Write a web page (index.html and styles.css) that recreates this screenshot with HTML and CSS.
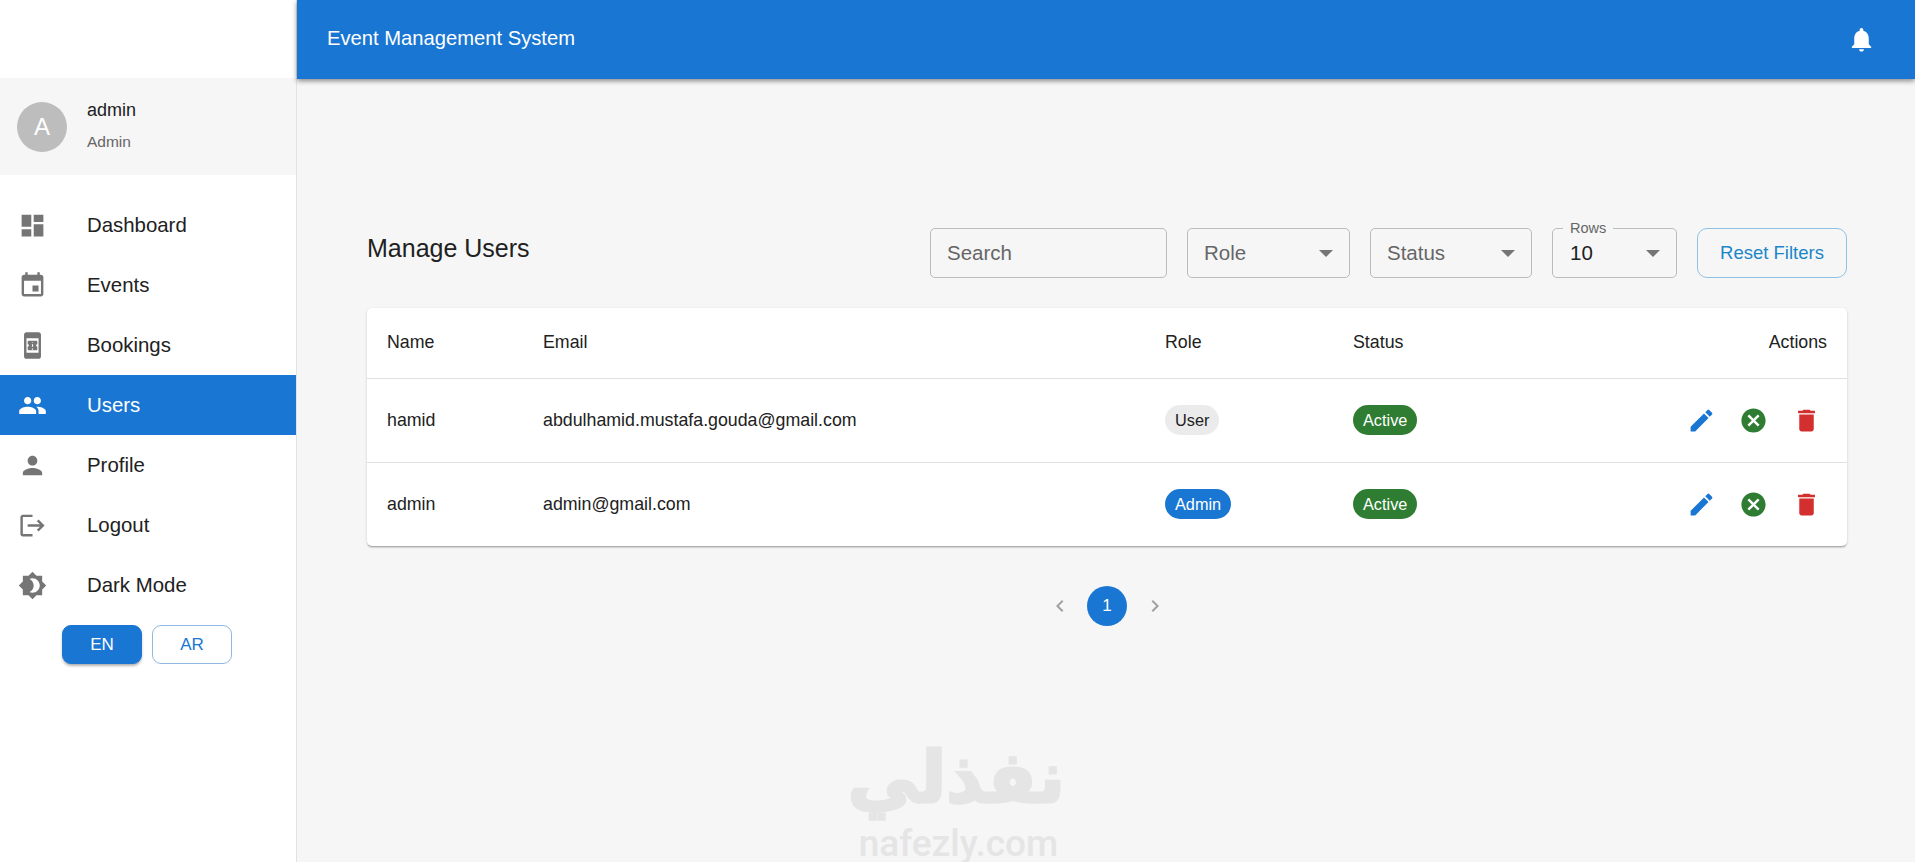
FILE: index.html
```html
<!DOCTYPE html>
<html lang="en">
<head>
  <meta charset="UTF-8" />
  <title>Event Management System</title>
  <link rel="stylesheet" href="styles.css">
</head>
<body>
  <aside class="sidebar">
    <div class="profile">
      <div class="avatar">A</div>
      <div class="profile-text">
        <div class="profile-name">admin</div>
        <div class="profile-role">Admin</div>
      </div>
    </div>

    <nav class="nav">
      <a class="nav-item">
        <svg class="nav-icon" viewBox="0 0 24 24"><path d="M3 13h8V3H3v10zm0 8h8v-6H3v6zm10 0h8V11h-8v10zm0-18v6h8V3h-8z"/></svg>
        <span>Dashboard</span>
      </a>
      <a class="nav-item">
        <svg class="nav-icon" viewBox="0 0 24 24"><path d="M17 12h-5v5h5v-5zM16 1v2H8V1H6v2H5c-1.11 0-1.99.9-1.99 2L3 19c0 1.1.89 2 2 2h14c1.1 0 2-.9 2-2V5c0-1.1-.9-2-2-2h-1V1h-2zm3 18H5V8h14v11z"/></svg>
        <span>Events</span>
      </a>
      <a class="nav-item">
        <svg class="nav-icon" viewBox="0 0 24 24"><path d="M17 1H7c-1.1 0-2 .9-2 2v18c0 1.1.9 2 2 2h10c1.1 0 2-.9 2-2V3c0-1.1-.9-2-2-2zM7 18V6h10v12H7zm9-7V9c0-.55-.45-1-1-1H9c-.55 0-.99.45-.99 1v2c.55 0 .99.45.99 1s-.44 1-1 1v2c0 .55.45 1 1 1h6c.55 0 1-.45 1-1v-2c-.55 0-1-.45-1-1s.45-1 1-1zm-3.500 4.500h-1v-1h1v1zm0-2.500h-1v-2h1v2zm0-3h-1V9.500h1V10z"/></svg>
        <span>Bookings</span>
      </a>
      <a class="nav-item active">
        <svg class="nav-icon" viewBox="0 0 24 24"><path d="M16 11c1.660 0 2.990-1.340 2.990-3S17.660 5 16 5c-1.660 0-3 1.340-3 3s1.340 3 3 3zm-8 0c1.660 0 2.990-1.340 2.990-3S9.660 5 8 5C6.340 5 5 6.340 5 8s1.340 3 3 3zm0 2c-2.330 0-7 1.170-7 3.500V19h14v-2.500c0-2.330-4.670-3.500-7-3.500zm8 0c-.29 0-.62.02-.97.05 1.160.84 1.970 1.970 1.970 3.450V19h6v-2.500c0-2.330-4.670-3.500-7-3.500z"/></svg>
        <span>Users</span>
      </a>
      <a class="nav-item">
        <svg class="nav-icon" viewBox="0 0 24 24"><path d="M12 12c2.210 0 4-1.790 4-4s-1.790-4-4-4-4 1.790-4 4 1.790 4 4 4zm0 2c-2.670 0-8 1.340-8 4v2h16v-2c0-2.660-5.330-4-8-4z"/></svg>
        <span>Profile</span>
      </a>
      <a class="nav-item">
        <svg class="nav-icon" viewBox="0 0 24 24"><path d="M17 7l-1.410 1.410L18.170 11H8v2h10.170l-2.580 2.580L17 17l5-5zM4 5h8V3H4c-1.100 0-2 .9-2 2v14c0 1.100.9 2 2 2h8v-2H4V5z"/></svg>
        <span>Logout</span>
      </a>
      <a class="nav-item">
        <svg class="nav-icon" viewBox="0 0 24 24"><path d="M20 8.690V4h-4.690L12 .69 8.690 4H4v4.690L.69 12 4 15.310V20h4.690L12 23.310 15.310 20H20v-4.690L23.310 12 20 8.690zM12 18c-.89 0-1.740-.2-2.500-.55C11.560 16.500 13 14.420 13 12s-1.440-4.500-3.500-5.450C10.260 6.200 11.110 6 12 6c3.310 0 6 2.690 6 6s-2.690 6-6 6z"/></svg>
        <span>Dark Mode</span>
      </a>
    </nav>

    <div class="lang">
      <button class="lang-btn lang-on">EN</button>
      <button class="lang-btn">AR</button>
    </div>
  </aside>

  <div class="main">
    <header class="appbar">
      <div class="appbar-title">Event Management System</div>
      <svg class="bell" viewBox="0 0 24 24"><path d="M12 22c1.100 0 2-.9 2-2h-4c0 1.100.89 2 2 2zm6-6v-5c0-3.070-1.640-5.640-4.500-6.320V4c0-.83-.67-1.500-1.500-1.500s-1.500.67-1.500 1.500v.68C7.630 5.360 6 7.920 6 11v5l-2 2v1h16v-1l-2-2z"/></svg>
    </header>

    <main class="content">
      <div class="toolbar">
        <h1 class="page-title">Manage Users</h1>
        <div class="filters">
          <div class="field field-search"><span class="placeholder">Search</span></div>
          <div class="field field-role"><span class="placeholder">Role</span><i class="caret"></i></div>
          <div class="field field-status"><span class="placeholder">Status</span><i class="caret"></i></div>
          <div class="field field-rows"><span class="field-label">Rows</span><span>10</span><i class="caret"></i></div>
          <button class="reset-btn">Reset Filters</button>
        </div>
      </div>

      <div class="card">
        <table class="users">
          <colgroup>
            <col class="col-name"><col class="col-email"><col class="col-role"><col class="col-status"><col>
          </colgroup>
          <thead>
            <tr><th>Name</th><th>Email</th><th>Role</th><th>Status</th><th class="right">Actions</th></tr>
          </thead>
          <tbody>
            <tr>
              <td>hamid</td>
              <td>abdulhamid.mustafa.gouda@gmail.com</td>
              <td><span class="chip chip-grey">User</span></td>
              <td><span class="chip chip-green">Active</span></td>
              <td class="right">
                <div class="actions">
                  <button class="act blue"><svg viewBox="0 0 24 24"><path d="M3 17.250V21h3.750L17.810 9.940l-3.750-3.750L3 17.250zM20.710 7.040c.39-.39.39-1.020 0-1.410l-2.340-2.340a.996.996 0 00-1.410 0l-1.830 1.830 3.750 3.750 1.830-1.830z"/></svg></button>
                  <button class="act green"><svg viewBox="0 0 24 24"><path d="M12 2C6.470 2 2 6.470 2 12s4.470 10 10 10 10-4.470 10-10S17.530 2 12 2zm5 13.590L15.590 17 12 13.410 8.410 17 7 15.590 10.590 12 7 8.410 8.410 7 12 10.590 15.590 7 17 8.410 13.410 12 17 15.590z"/></svg></button>
                  <button class="act red"><svg viewBox="0 0 24 24"><path d="M6 19c0 1.100.9 2 2 2h8c1.100 0 2-.9 2-2V7H6v12zM19 4h-3.500l-1-1h-5l-1 1H5v2h14V4z"/></svg></button>
                </div>
              </td>
            </tr>
            <tr>
              <td>admin</td>
              <td>admin@gmail.com</td>
              <td><span class="chip chip-blue">Admin</span></td>
              <td><span class="chip chip-green">Active</span></td>
              <td class="right">
                <div class="actions">
                  <button class="act blue"><svg viewBox="0 0 24 24"><path d="M3 17.250V21h3.750L17.810 9.940l-3.750-3.750L3 17.250zM20.710 7.040c.39-.39.39-1.020 0-1.410l-2.340-2.340a.996.996 0 00-1.410 0l-1.830 1.830 3.750 3.750 1.830-1.830z"/></svg></button>
                  <button class="act green"><svg viewBox="0 0 24 24"><path d="M12 2C6.470 2 2 6.470 2 12s4.470 10 10 10 10-4.470 10-10S17.530 2 12 2zm5 13.590L15.590 17 12 13.410 8.410 17 7 15.590 10.590 12 7 8.410 8.410 7 12 10.590 15.590 7 17 8.410 13.410 12 17 15.590z"/></svg></button>
                  <button class="act red"><svg viewBox="0 0 24 24"><path d="M6 19c0 1.100.9 2 2 2h8c1.100 0 2-.9 2-2V7H6v12zM19 4h-3.500l-1-1h-5l-1 1H5v2h14V4z"/></svg></button>
                </div>
              </td>
            </tr>
          </tbody>
        </table>
      </div>

      <div class="pager">
        <button class="page-arrow"><svg viewBox="0 0 24 24"><path d="M15.410 7.410L14 6l-6 6 6 6 1.410-1.410L10.830 12z"/></svg></button>
        <button class="page-num">1</button>
        <button class="page-arrow"><svg viewBox="0 0 24 24"><path d="M10 6L8.590 7.410 13.170 12l-4.580 4.590L10 18l6-6z"/></svg></button>
      </div>
    </main>

    <div class="watermark">
      <div class="wm-ar" lang="ar" dir="rtl">نفذلي</div>
      <div class="wm-en">nafezly.com</div>
    </div>
  </div>
</body>
</html>
```

FILE: styles.css
```css
* { box-sizing: border-box; }
html, body { height: 100%; }
body {
  margin: 0;
  display: flex;
  overflow: hidden;
  background: #f6f6f6;
  color: #212121;
  font-family: "Liberation Sans", Arial, sans-serif;
}
button { font-family: inherit; cursor: pointer; }

/* sidebar */
.sidebar {
  width: 297px;
  flex: none;
  padding-top: 78px;
  background: #fff;
  border-right: 1px solid #e3e3e3;
}
.profile {
  height: 97px;
  display: flex;
  align-items: center;
  gap: 20px;
  padding-left: 17px;
  background: #f6f6f6;
}
.avatar {
  width: 50px;
  height: 50px;
  border-radius: 50%;
  background: #bdbdbd;
  color: #fff;
  font-size: 24px;
  display: flex;
  align-items: center;
  justify-content: center;
}
.profile-text { margin-bottom: 3px; }
.profile-name { font-size: 18px; line-height: 24px; }
.profile-role { font-size: 15.500px; line-height: 20px; margin-top: 10px; color: #666; }

.nav { margin-top: 20px; }
.nav-item {
  height: 60px;
  display: flex;
  align-items: center;
  padding-left: 18px;
  font-size: 20.400px;
  color: #212121;
}
.nav-icon { width: 29px; height: 29px; margin-right: 40px; fill: #757575; flex: none; }
.nav-item.active { background: #1976d2; color: #fff; }
.nav-item.active .nav-icon { fill: #fff; }

.lang {
  display: flex;
  gap: 10px;
  margin: 10px 0 0 62px;
}
.lang-btn {
  width: 80px;
  height: 39px;
  border: 1px solid #90b8e0;
  border-radius: 9px;
  background: #fff;
  color: #1976d2;
  font-size: 17px;
}
.lang-on {
  background: #1976d2;
  border-color: #1976d2;
  color: #fff;
  box-shadow: 0 3px 3px -2px rgba(0,0,0,0.2), 0 2px 3px rgba(0,0,0,0.2);
}

/* main area */
.main { flex: 1; position: relative; min-width: 0; }
.appbar {
  height: 79px;
  display: flex;
  align-items: center;
  justify-content: space-between;
  padding: 0 39px 0 30px;
  background: #1976d2;
  color: #fff;
  box-shadow: 0 2px 5px rgba(0,0,0,0.45);
}
.appbar-title { font-size: 20.200px; margin-bottom: 2px; }
.bell { width: 29px; height: 29px; fill: #fff; }

.content { padding: 149px 68px 0 70px; }
.toolbar {
  display: flex;
  justify-content: space-between;
  height: 50px;
  margin-bottom: 30px;
}
.page-title { margin: 5px 0 0; font-size: 25px; line-height: 30px; font-weight: 400; }
.filters { display: flex; gap: 20px; }
.field {
  position: relative;
  height: 50px;
  display: flex;
  align-items: center;
  padding-left: 16px;
  border: 1px solid #bbb;
  border-radius: 5px;
  font-size: 20.500px;
  color: #212121;
}
.field-search { width: 237px; }
.field-role { width: 163px; }
.field-status { width: 162px; }
.field-rows { width: 125px; padding-left: 17px; }
.placeholder { color: #666; }
.field-label {
  position: absolute;
  top: -9px;
  left: 10px;
  padding: 0 7px;
  font-size: 14.500px;
  line-height: 16px;
  color: #666;
  background: #f6f6f6;
}
.caret {
  position: absolute;
  right: 16px;
  top: 21px;
  border-left: 7px solid transparent;
  border-right: 7px solid transparent;
  border-top: 7px solid #757575;
}
.reset-btn {
  width: 150px;
  height: 50px;
  border: 1px solid #8fc2e2;
  border-radius: 10px;
  background: transparent;
  color: #1c86c9;
  font-size: 18.500px;
}

/* table */
.card {
  background: #fff;
  border-radius: 5px;
  overflow: hidden;
  box-shadow: 0 2px 2px -1px rgba(0,0,0,0.3), 0 1px 3px rgba(0,0,0,0.14);
}
.users {
  width: 100%;
  border-collapse: collapse;
  table-layout: fixed;
  font-size: 17.800px;
}
.col-name { width: 156px; }
.col-email { width: 622px; }
.col-role { width: 188px; }
.col-status { width: 200px; }
.users th, .users td {
  padding: 0 20px;
  text-align: left;
  font-weight: 400;
  border-bottom: 1px solid #e0e0e0;
}
.users tr:last-child td { border-bottom: 0; }
.users th { height: 70px; }
.users td { height: 84px; }
.users .right { text-align: right; }

.chip {
  display: inline-block;
  height: 30px;
  line-height: 30px;
  padding: 0 10px;
  border-radius: 15px;
  font-size: 16.300px;
}
.chip-grey { background: #ebebeb; color: #212121; }
.chip-blue { background: #1976d2; color: #fff; }
.chip-green { background: #2e7d32; color: #fff; }

.actions { display: flex; justify-content: flex-end; gap: 10.500px; }
.act {
  width: 42px;
  height: 42px;
  padding: 0;
  border: 0;
  background: none;
  display: flex;
  align-items: center;
  justify-content: center;
}
.act svg { width: 29px; height: 29px; }
.blue svg { fill: #1976d2; }
.green svg { fill: #2e7d32; }
.red svg { fill: #d32f2f; }

/* pagination */
.pager {
  display: flex;
  justify-content: center;
  gap: 7.500px;
  margin-top: 40px;
}
.page-arrow, .page-num {
  width: 40px;
  height: 40px;
  padding: 0;
  border: 0;
  border-radius: 50%;
  background: none;
  display: flex;
  align-items: center;
  justify-content: center;
}
.page-arrow svg { width: 24px; height: 24px; fill: #a0a0a0; }
.page-num { background: #1976d2; color: #fff; font-size: 17px; }

/* watermark sits over the page background */
.watermark {
  position: absolute;
  left: 555px;
  top: 738px;
  width: 213px;
  text-align: center;
  color: #e5e5e5;
  pointer-events: none;
}
.wm-ar {
  font-family: "DejaVu Sans", sans-serif;
  font-weight: 700;
  font-size: 71px;
  line-height: 80px;
  -webkit-text-stroke: 3px #e5e5e5;
}
.wm-en { font-family: Roboto, sans-serif; font-weight: 500; font-size: 37px; line-height: 40px; margin-top: 6px; }
```
